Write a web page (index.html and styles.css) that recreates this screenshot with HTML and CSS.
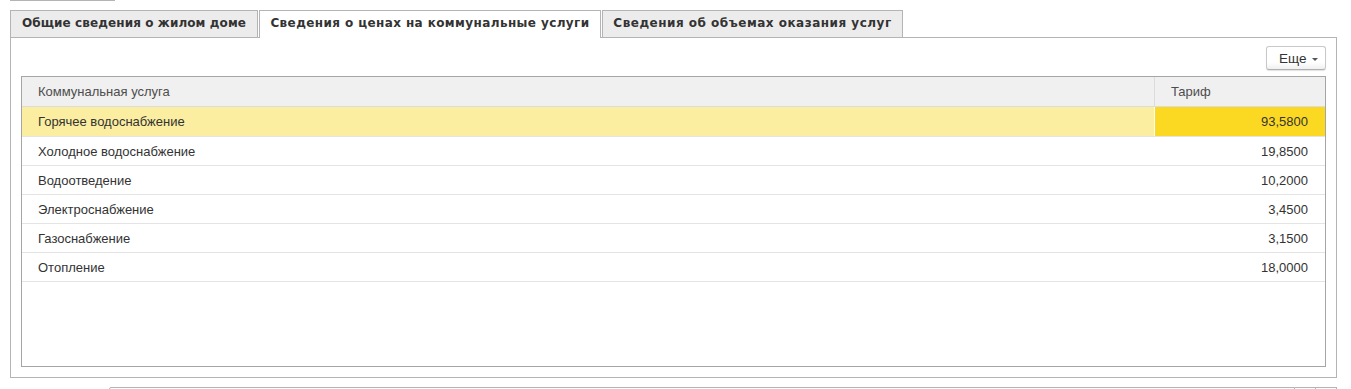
FILE: index.html
```html
<!DOCTYPE html>
<html lang="ru">
<head>
    <meta charset="UTF-8">
    <title>Сведения о ценах на коммунальные услуги</title>
    <link rel="stylesheet" href="styles.css">
</head>
<body>
    <div class="page">
        <!-- край кнопки над вкладками -->
        <div class="top-stub"></div>

        <div class="tabs">
            <div class="tab tab-1">Общие сведения о жилом доме</div>
            <div class="tab tab-2 active">Сведения о ценах на коммунальные услуги</div>
            <div class="tab tab-3">Сведения об объемах оказания услуг</div>
        </div>

        <div class="panel">
            <div class="toolbar">
                <button class="more-btn">Еще <span class="caret"></span></button>
            </div>

            <div class="grid">
                <div class="grid-head">
                    <div class="cell name">Коммунальная услуга</div>
                    <div class="cell tariff">Тариф</div>
                </div>
                <div class="row selected">
                    <div class="cell name">Горячее водоснабжение</div>
                    <div class="cell tariff">93,5800</div>
                </div>
                <div class="row">
                    <div class="cell name">Холодное водоснабжение</div>
                    <div class="cell tariff">19,8500</div>
                </div>
                <div class="row">
                    <div class="cell name">Водоотведение</div>
                    <div class="cell tariff">10,2000</div>
                </div>
                <div class="row">
                    <div class="cell name">Электроснабжение</div>
                    <div class="cell tariff">3,4500</div>
                </div>
                <div class="row">
                    <div class="cell name">Газоснабжение</div>
                    <div class="cell tariff">3,1500</div>
                </div>
                <div class="row">
                    <div class="cell name">Отопление</div>
                    <div class="cell tariff">18,0000</div>
                </div>
            </div>
        </div>

        <!-- поле внизу, видна только верхняя кромка -->
        <div class="bottom-field">
            <div class="bf-input"></div>
            <div class="bf-btn"></div>
            <div class="bf-btn"></div>
        </div>
    </div>
</body>
</html>
```

FILE: styles.css
```css
body {
    margin: 0;
    background: #ffffff;
    font-family: Arial, "Liberation Sans", sans-serif;
    color: #333;
    overflow: hidden;
}

.page {
    width: 1327px;
    margin-left: 10px;
}

.top-stub {
    width: 105px;
    height: 1px;
    background: #b4b4b4;
    margin-bottom: 9px;
}

/* вкладки */
.tabs {
    display: flex;
    height: 27px;
}

.tab {
    box-sizing: border-box;
    height: 27px;
    margin-right: 1px;
    border: 1px solid #b4b4b4;
    border-bottom: none;
    background: #ececec;
    font-family: "DejaVu Sans", Verdana, sans-serif;
    font-size: 12px;
    font-weight: bold;
    color: #333;
    line-height: 25px;
    text-align: center;
    white-space: nowrap;
}

.tab-1 {
    width: 248px;
    letter-spacing: 0.1px;
}

.tab-2 {
    width: 342px;
    letter-spacing: 0.4px;
}

.tab-3 {
    width: 301px;
    letter-spacing: 0.5px;
}

.tab.active {
    background: #ffffff;
    height: 28px;
    position: relative;
    z-index: 1;
}

/* панель */
.panel {
    box-sizing: border-box;
    height: 341px;
    border: 1px solid #b4b4b4;
    padding: 8px 10px 10px 10px;
}

.toolbar {
    display: flex;
    justify-content: flex-end;
    margin-bottom: 6px;
}

.more-btn {
    box-sizing: border-box;
    width: 60px;
    height: 24px;
    padding: 0 0 0 12px;
    border: 1px solid #c8c8c8;
    border-bottom-color: #b0b0b0;
    border-radius: 3px;
    background: linear-gradient(#ffffff 70%, #f0f0f0);
    box-shadow: 0 1px 1px rgba(0, 0, 0, 0.12);
    font-family: Arial, "Liberation Sans", sans-serif;
    font-size: 13.5px;
    color: #333;
    text-align: left;
    display: flex;
    align-items: center;
}

.caret {
    display: inline-block;
    margin-left: 6px;
    margin-top: 2px;
    border-left: 3px solid transparent;
    border-right: 3px solid transparent;
    border-top: 3px solid #555;
}

/* таблица */
.grid {
    box-sizing: border-box;
    height: 291px;
    border: 1px solid #a5a5a5;
}

.grid-head,
.row {
    display: flex;
    font-size: 13px;
}

.grid-head {
    height: 29px;
    background: #f0f0f0;
    border-bottom: 1px solid #dcdcdc;
    color: #4d4d4d;
}

.row {
    height: 28px;
    border-bottom: 1px solid #e4e4e4;
    color: #333;
}

.cell {
    box-sizing: border-box;
    display: flex;
    align-items: center;
    white-space: nowrap;
}

.cell.name {
    flex: 1;
    padding-left: 16px;
}

.cell.tariff {
    width: 171px;
    justify-content: flex-end;
    padding-right: 17px;
}

.grid-head .cell.tariff {
    justify-content: flex-start;
    padding-left: 16px;
    border-left: 1px solid #dcdcdc;
}

.row.selected {
    height: 29px;
    background: #fbeea0;
}

.row.selected .cell.tariff {
    background: #fbd923;
    border-left: 1px solid #ffffff;
}

/* нижнее поле */
.bottom-field {
    display: flex;
    margin-top: 9px;
    margin-left: 99px;
    height: 20px;
}

.bf-input {
    flex: 1;
    border: 1px solid #b4b4b4;
    border-radius: 2px 0 0 0;
}

.bf-btn {
    width: 20px;
    border: 1px solid #b4b4b4;
    border-left: none;
}
```
